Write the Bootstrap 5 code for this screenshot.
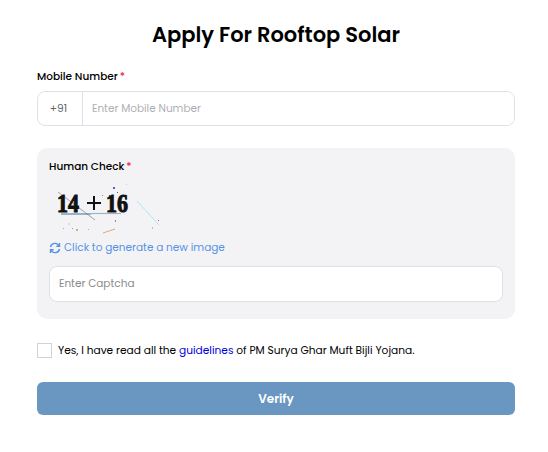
<!DOCTYPE html>
<html><head><meta charset="utf-8">
<link href="https://cdn.jsdelivr.net/npm/bootstrap@5.3.0/dist/css/bootstrap.min.css" rel="stylesheet">
<style>
body{background:#fff;font-family:Poppins,"Open Sans","Noto Sans",sans-serif;color:#000;overflow:hidden}
.wrap{padding:18px 33px 0 37px}
.ttl{font-size:21px;font-weight:600;line-height:34px;margin:0 0 16px;text-align:center}
.lbl{font-size:10.5px;line-height:18px;margin-bottom:5px;font-weight:500}
.req{color:#f0304a;margin-left:2px}
.grp{height:35px;border:1px solid #e0e1e8;border-radius:8px;overflow:hidden;display:flex}
.pre{width:45px;border-right:1px solid #e0e1e8;font-size:10.6px;color:#666;display:flex;align-items:center;justify-content:center;padding-right:3px}
.inp{border:0;padding:0 9px;font-size:10.5px;flex:1;outline:0}
.inp::placeholder{color:#b0b0b4}
.panel{background:#f3f3f6;border-radius:10px;margin-top:22px;padding:10px 12px 17px}
.regen{font-size:10.5px;color:#5593e6;line-height:18px;margin-top:3px;gap:3px}
.cap{display:block}
.box{height:36px;border:1px solid #e0e1e8;border-radius:8px;background:#fff;width:100%;padding:0 9px;font-size:10.5px;margin-top:9px;outline:0}
.box::placeholder{color:#8b8b8b}
.chk{width:15px;height:15px;border:1px solid #d0d2d6;background:#fff;flex:none}
.agree{font-size:10.62px;margin-top:24px;line-height:15px;gap:6px}
.agree a{color:#0000e0;text-decoration:none}
.go{display:block;width:100%;height:33px;background:#6a97c2;color:#fff;border:0;border-radius:6px;font-weight:600;font-size:12px;margin-top:24px}
.capt{font-family:"Liberation Serif",serif;font-weight:700;font-size:25px;fill:#111;stroke:#111;stroke-width:1}
</style></head><body>
<div class="wrap">
<h1 class="ttl">Apply For Rooftop Solar</h1>
<div class="lbl">Mobile Number<span class="req">*</span></div>
<div class="grp"><span class="pre">+91</span><input class="inp" placeholder="Enter Mobile Number"></div>
<div class="panel">
<div class="lbl mb-0">Human Check<span class="req">*</span></div>
<svg class="cap" width="112" height="60" viewBox="0 0 112 60">
<path d="M9 16L46 44" stroke="#8f8a94" stroke-width=".8"/>
<text class="capt" x="8" y="36" textLength="22" lengthAdjust="spacingAndGlyphs">14</text>
<path d="M38 27h14M45 20v14" stroke="#111" stroke-width="2"/>
<text class="capt" x="57" y="36" textLength="22" lengthAdjust="spacingAndGlyphs">16</text>
<path d="M12 38H42" stroke="#3f7396" stroke-width="1"/><path d="M42 37.500H72" stroke="#9db4c6" stroke-width="1.200"/>
<path d="M88 25L110 49" stroke="#8fe6f2" stroke-width=".8"/>
<path d="M54 57L66 53" stroke="#e2a67e" stroke-width="1"/>
<g>
<rect x="64" y="11" width="2" height="2" fill="#5a60c0"/><rect x="53" y="19" width="1" height="1" fill="#a070c0"/><rect x="60" y="19" width="1" height="1" fill="#304080"/><rect x="68" y="16" width="1" height="1" fill="#4070a0"/><rect x="77" y="8" width="1" height="1" fill="#ccc"/>
<rect x="66" y="44" width="1" height="2" fill="#9a80b0"/><rect x="14" y="52" width="1" height="1" fill="#70d080"/><rect x="23" y="52" width="1" height="1" fill="#70a0e0"/><rect x="27" y="53" width="2" height="2" fill="#b8c070"/><rect x="39" y="53" width="1" height="1" fill="#c8a0c0"/><rect x="19" y="47" width="2" height="2" fill="#ddd"/><rect x="109" y="44" width="1" height="1" fill="#e04060"/><rect x="103" y="51" width="1" height="2" fill="#bbb"/>
</g></svg>
<div class="regen d-flex align-items-center"><svg width="12" height="12" viewBox="0 0 12 12" fill="none" stroke="#5593e6" stroke-width="1.400"><path d="M1.500 5A4.500 4.500 0 0 1 10 4M10.500 7A4.500 4.500 0 0 1 2 8"/><path d="M10.500 1v3.200H7.300M1.500 11V7.800h3.200"/></svg>Click to generate a new image</div>
<input class="box" placeholder="Enter Captcha">
</div>
<div class="agree d-flex align-items-center"><span class="chk"></span><span>Yes, I have read all the <a href="#">guidelines</a> of PM Surya Ghar Muft Bijli Yojana.</span></div>
<button class="go">Verify</button>
</div>
</body></html>
